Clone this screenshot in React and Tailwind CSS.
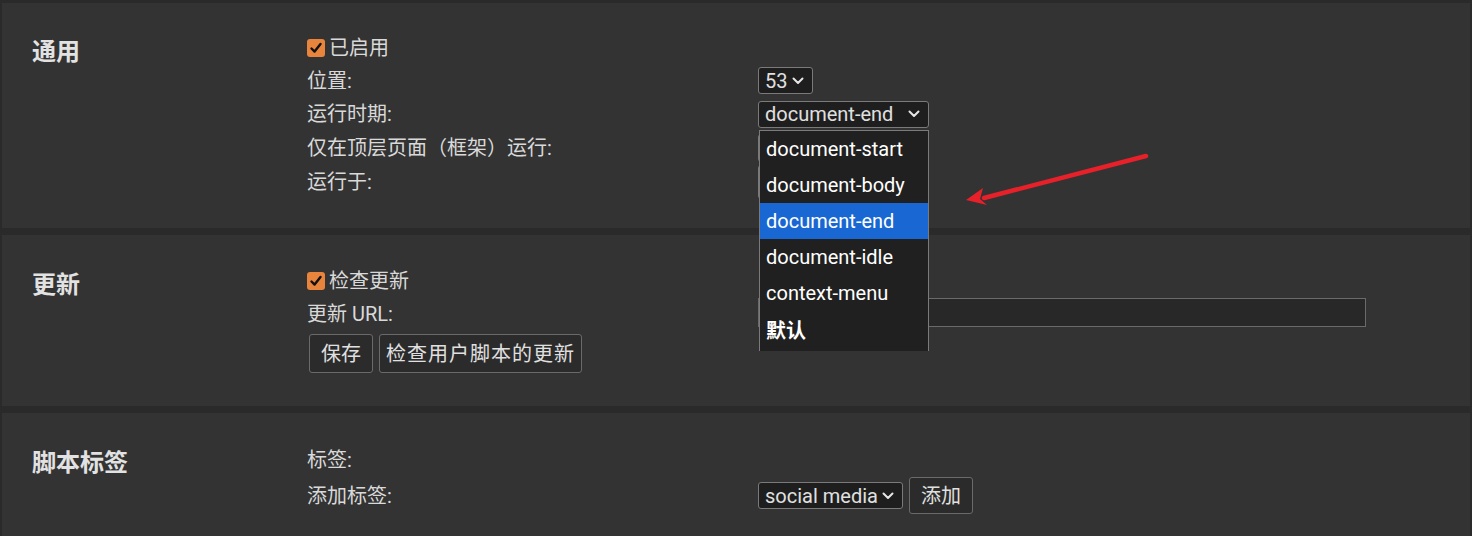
import React from "react";

const font = { fontFamily: "Roboto, 'Noto Sans CJK SC', sans-serif" };

const Chevron = () => (
  <svg width="12" height="8" viewBox="0 0 12 8" className="shrink-0">
    <path d="M1.5 1.5 L6 6 L10.5 1.5" fill="none" stroke="#e6e6e6" strokeWidth="2" strokeLinecap="round" strokeLinejoin="round" />
  </svg>
);

const Check = ({ label }) => (
  <label className="flex items-center gap-[4px]">
    <span className="w-[18px] h-[18px] rounded-[3px] bg-[#e8843b] flex items-center justify-center">
      <svg width="14" height="14" viewBox="0 0 14 14">
        <path d="M2.5 7.5 L5.6 10.6 L11.5 3" fill="none" stroke="#111" strokeWidth="2.4" strokeLinecap="round" strokeLinejoin="round" />
      </svg>
    </span>
    <span>{label}</span>
  </label>
);

const Select = ({ value, className, children }) => (
  <div className={"relative h-[27px] border border-[#7a7a7a] rounded-[3px] bg-[#1e1e1e] flex items-center justify-between pl-[6px] pr-[8px] text-[#e0e0e0] " + className}>
    <span>{value}</span>
    <Chevron />
    {children}
  </div>
);

const Button = ({ children, className }) => (
  <button className={"border border-[#6a6a6a] rounded-[3px] bg-[#2b2b2b] text-[#e0e0e0] " + className}>
    {children}
  </button>
);

const Row = ({ label, h = "h-[34px]", children }) => (
  <>
    <div className={"flex items-center whitespace-nowrap " + h}>{label}</div>
    <div className={"flex items-center " + h}>{children}</div>
  </>
);

const Panel = ({ title, className, children }) => (
  <section className={"bg-[#333333] px-[30px] grid grid-cols-[275px_1fr] " + className}>
    <h2 className="self-start mt-[6px] text-[24px] leading-[28px] font-bold text-[#e2e2e2]">
      {title}
    </h2>
    <div className="grid grid-cols-[451px_1fr] content-start">{children}</div>
  </section>
);

const options = ["document-start", "document-body", "document-end", "document-idle", "context-menu"];

export default function App() {
  return (
    <div className="relative min-h-screen bg-[#2a2a2a] pt-[3px] px-[2px] flex flex-col gap-[7px] text-[20px] text-[#d9d9d9]" style={font}>
      <Panel title="通用" className="h-[225px] pt-[29px]">
        <Row label={<Check label="已启用" />} h="h-[32px]" />
        <Row label="位置:" h="h-[33px]">
          <Select value="53" className="w-[55px]" />
        </Row>
        <Row label="运行时期:">
          <Select value="document-end" className="w-[171px] z-10">
            <div className="absolute left-0 top-[28px] w-[170px] border border-b-0 border-[#7a7a7a] bg-[#202020] text-white">
              {options.map((o) => (
                <div key={o} className={"h-[36px] flex items-center px-[6px] " + (o === "document-end" ? "bg-[#1967d2]" : "")}>
                  {o}
                </div>
              ))}
              <div className="h-[40px] flex items-center px-[6px] font-bold">默认</div>
            </div>
          </Select>
        </Row>
        <Row label="仅在顶层页面（框架）运行:">
          <div className="w-[100px] h-[28px] border border-[#7a7a7a] rounded-[3px] bg-[#1e1e1e]" />
        </Row>
        <Row label="运行于:">
          <div className="w-[120px] h-[34px] border border-[#7a7a7a] rounded-[3px] bg-[#1e1e1e]" />
        </Row>
      </Panel>

      <Panel title="更新" className="h-[171px] pt-[30px]">
        <Row label={<Check label="检查更新" />} h="h-[32px]" />
        <Row label="更新 URL:">
          <div className="w-[608px] h-[29px] border border-[#6a6a6a] bg-[#282828] -mt-[3px]" />
        </Row>
        <div className="col-span-2 flex gap-[6px] mt-[3px] ml-[2px]">
          <Button className="h-[39px] w-[64px]">保存</Button>
          <Button className="h-[39px] w-[203px] tracking-[1px]">检查用户脚本的更新</Button>
        </div>
      </Panel>

      <Panel title="脚本标签" className="flex-1 min-h-[123px] pt-[30px]">
        <Row label="标签:" />
        <Row label="添加标签:" h="h-[37px]">
          <div className="flex items-center gap-[6px]">
            <Select value="social media" className="w-[145px] pr-[6px] gap-[4px]" />
            <Button className="h-[37px] w-[64px]">添加</Button>
          </div>
        </Row>
      </Panel>

      <svg className="absolute left-0 top-0 pointer-events-none" width="1472" height="536">
        <line x1="1146" y1="156" x2="984" y2="198" stroke="#e8202a" strokeWidth="4.5" strokeLinecap="round" />
        <path d="M966 200 L983 188 L980 199 L987 205 Z" fill="#e8202a" />
      </svg>
    </div>
  );
}
